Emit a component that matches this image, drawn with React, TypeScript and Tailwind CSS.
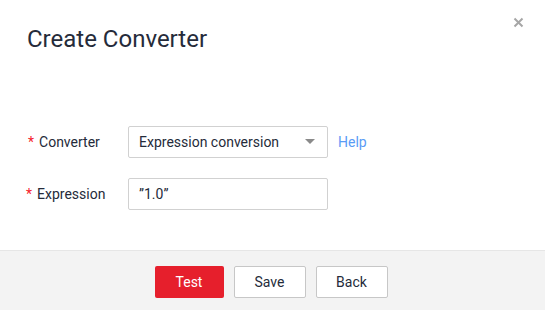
import React from "react";

export default function App() {
  return (
    <div
      className="w-[545px] h-[310px] bg-white flex flex-col relative overflow-hidden"
      style={{ fontFamily: "Roboto, 'Liberation Sans', sans-serif" }}
    >
      <button className="absolute left-[513px] top-[17px] w-[11px] h-[11px] flex items-center justify-center">
        <svg width="11" height="11" viewBox="0 0 11 11">
          <path d="M1.5 1.5 L9.5 9.5 M9.5 1.5 L1.5 9.5" stroke="#a6a6a6" strokeWidth="2" />
        </svg>
      </button>
      <div className="pt-[24px] pl-[27px] text-[24px] leading-[30px] text-[#252b3a]">
        Create Converter
      </div>
      <div className="flex-1 flex flex-col gap-[20px] pt-[72px]">
        <div className="flex items-center">
          <div className="w-[128px] pl-[28px] text-[14px] text-[#252b3a] flex items-center">
            <span className="text-[#f5222d] mr-[5px]">*</span>
            <span>Converter</span>
          </div>
          <div className="w-[200px] h-[32px] border border-[#d1d1d1] rounded-[2px] flex items-center justify-between pl-[10px] pr-[12px] text-[14px] text-[#252b3a]">
            <span>Expression conversion</span>
            <svg width="10" height="6" viewBox="0 0 10 6">
              <path d="M0 0 L10 0 L5 5 Z" fill="#8a8a8a" />
            </svg>
          </div>
          <span className="ml-[10px] text-[14px] text-[#5a9bf6]">Help</span>
        </div>
        <div className="flex items-center">
          <div className="w-[128px] pl-[26px] text-[14px] text-[#252b3a] flex items-center">
            <span className="text-[#f5222d] mr-[5px]">*</span>
            <span>Expression</span>
          </div>
          <div className="w-[200px] h-[32px] border border-[#d1d1d1] rounded-[2px] flex items-center pl-[10px] text-[14px] text-[#252b3a]">
            ”1.0”
          </div>
        </div>
      </div>
      <div className="h-[60px] bg-[#f3f3f3] border-t border-[#e6e6e6] flex justify-center items-start pt-[15px] pr-[3px] gap-[10px]">
        <button className="w-[69px] h-[32px] rounded-[2px] bg-[#e61f2c] text-white text-[14px]">
          Test
        </button>
        <button className="w-[72px] h-[32px] rounded-[2px] bg-white border border-[#c7c7c7] text-[#252b3a] text-[14px]">
          Save
        </button>
        <button className="w-[72px] h-[32px] rounded-[2px] bg-white border border-[#c7c7c7] text-[#252b3a] text-[14px]">
          Back
        </button>
      </div>
    </div>
  );
}
